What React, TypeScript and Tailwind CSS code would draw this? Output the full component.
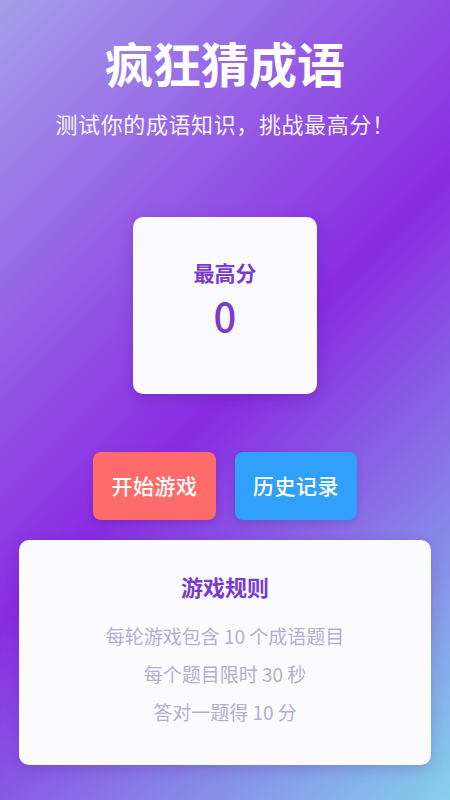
export default function App() {
  const font = { fontFamily: '"Noto Sans CJK SC", "Noto Sans", sans-serif' };
  return (
    <div
      className="w-[450px] h-[800px] flex flex-col items-center bg-[linear-gradient(135deg,#a49fea_0%,#8a2be2_50%,#85d0ec_100%)]"
      style={font}
    >
      <h1 className="mt-[38px] h-[48px] text-[48px] leading-[48px] font-bold text-white">
        疯狂猜成语
      </h1>
      <p className="mt-[26px] h-[22px] text-[22px] leading-[22px] text-white/95 tracking-[0.6px]">
        测试你的成语知识，挑战最高分！
      </p>

      <div className="mt-[83px] w-[184px] h-[177px] rounded-[10px] bg-[#fbfaff] shadow-[0_4px_14px_rgba(60,20,120,0.25)] flex flex-col items-center">
        <div className="mt-[44px] h-[22px] text-[21px] leading-[22px] font-semibold text-[#7a3ccf]">
          最高分
        </div>
        <div className="mt-[12px] h-[40px] text-[40px] leading-[40px] font-medium text-[#7a3ccf]">
          0
        </div>
      </div>

      <div className="mt-[58px] flex gap-[19px]">
        <button className="w-[123px] h-[68px] rounded-[8px] bg-[#fe6b6b] text-white text-[21px] font-medium tracking-[0.5px] shadow-[0_3px_8px_rgba(0,0,0,0.12)]">
          开始游戏
        </button>
        <button className="w-[122px] h-[68px] rounded-[8px] bg-[#31a0fb] text-white text-[21px] font-medium tracking-[0.5px] shadow-[0_3px_8px_rgba(0,0,0,0.12)]">
          历史记录
        </button>
      </div>

      <div className="mt-[20px] w-[412px] h-[225px] rounded-[10px] bg-[#fbfbfe] shadow-[0_4px_14px_rgba(60,20,120,0.2)] flex flex-col items-center">
        <div className="mt-[35px] h-[22px] text-[22px] leading-[22px] font-bold text-[#7a3ccf]">
          游戏规则
        </div>
        <div className="mt-[29px] flex flex-col items-center gap-[19px] text-[19px] leading-[19px] text-[#b2b0d0]">
          <div>每轮游戏包含 10 个成语题目</div>
          <div>每个题目限时 30 秒</div>
          <div>答对一题得 10 分</div>
        </div>
      </div>
    </div>
  );
}
